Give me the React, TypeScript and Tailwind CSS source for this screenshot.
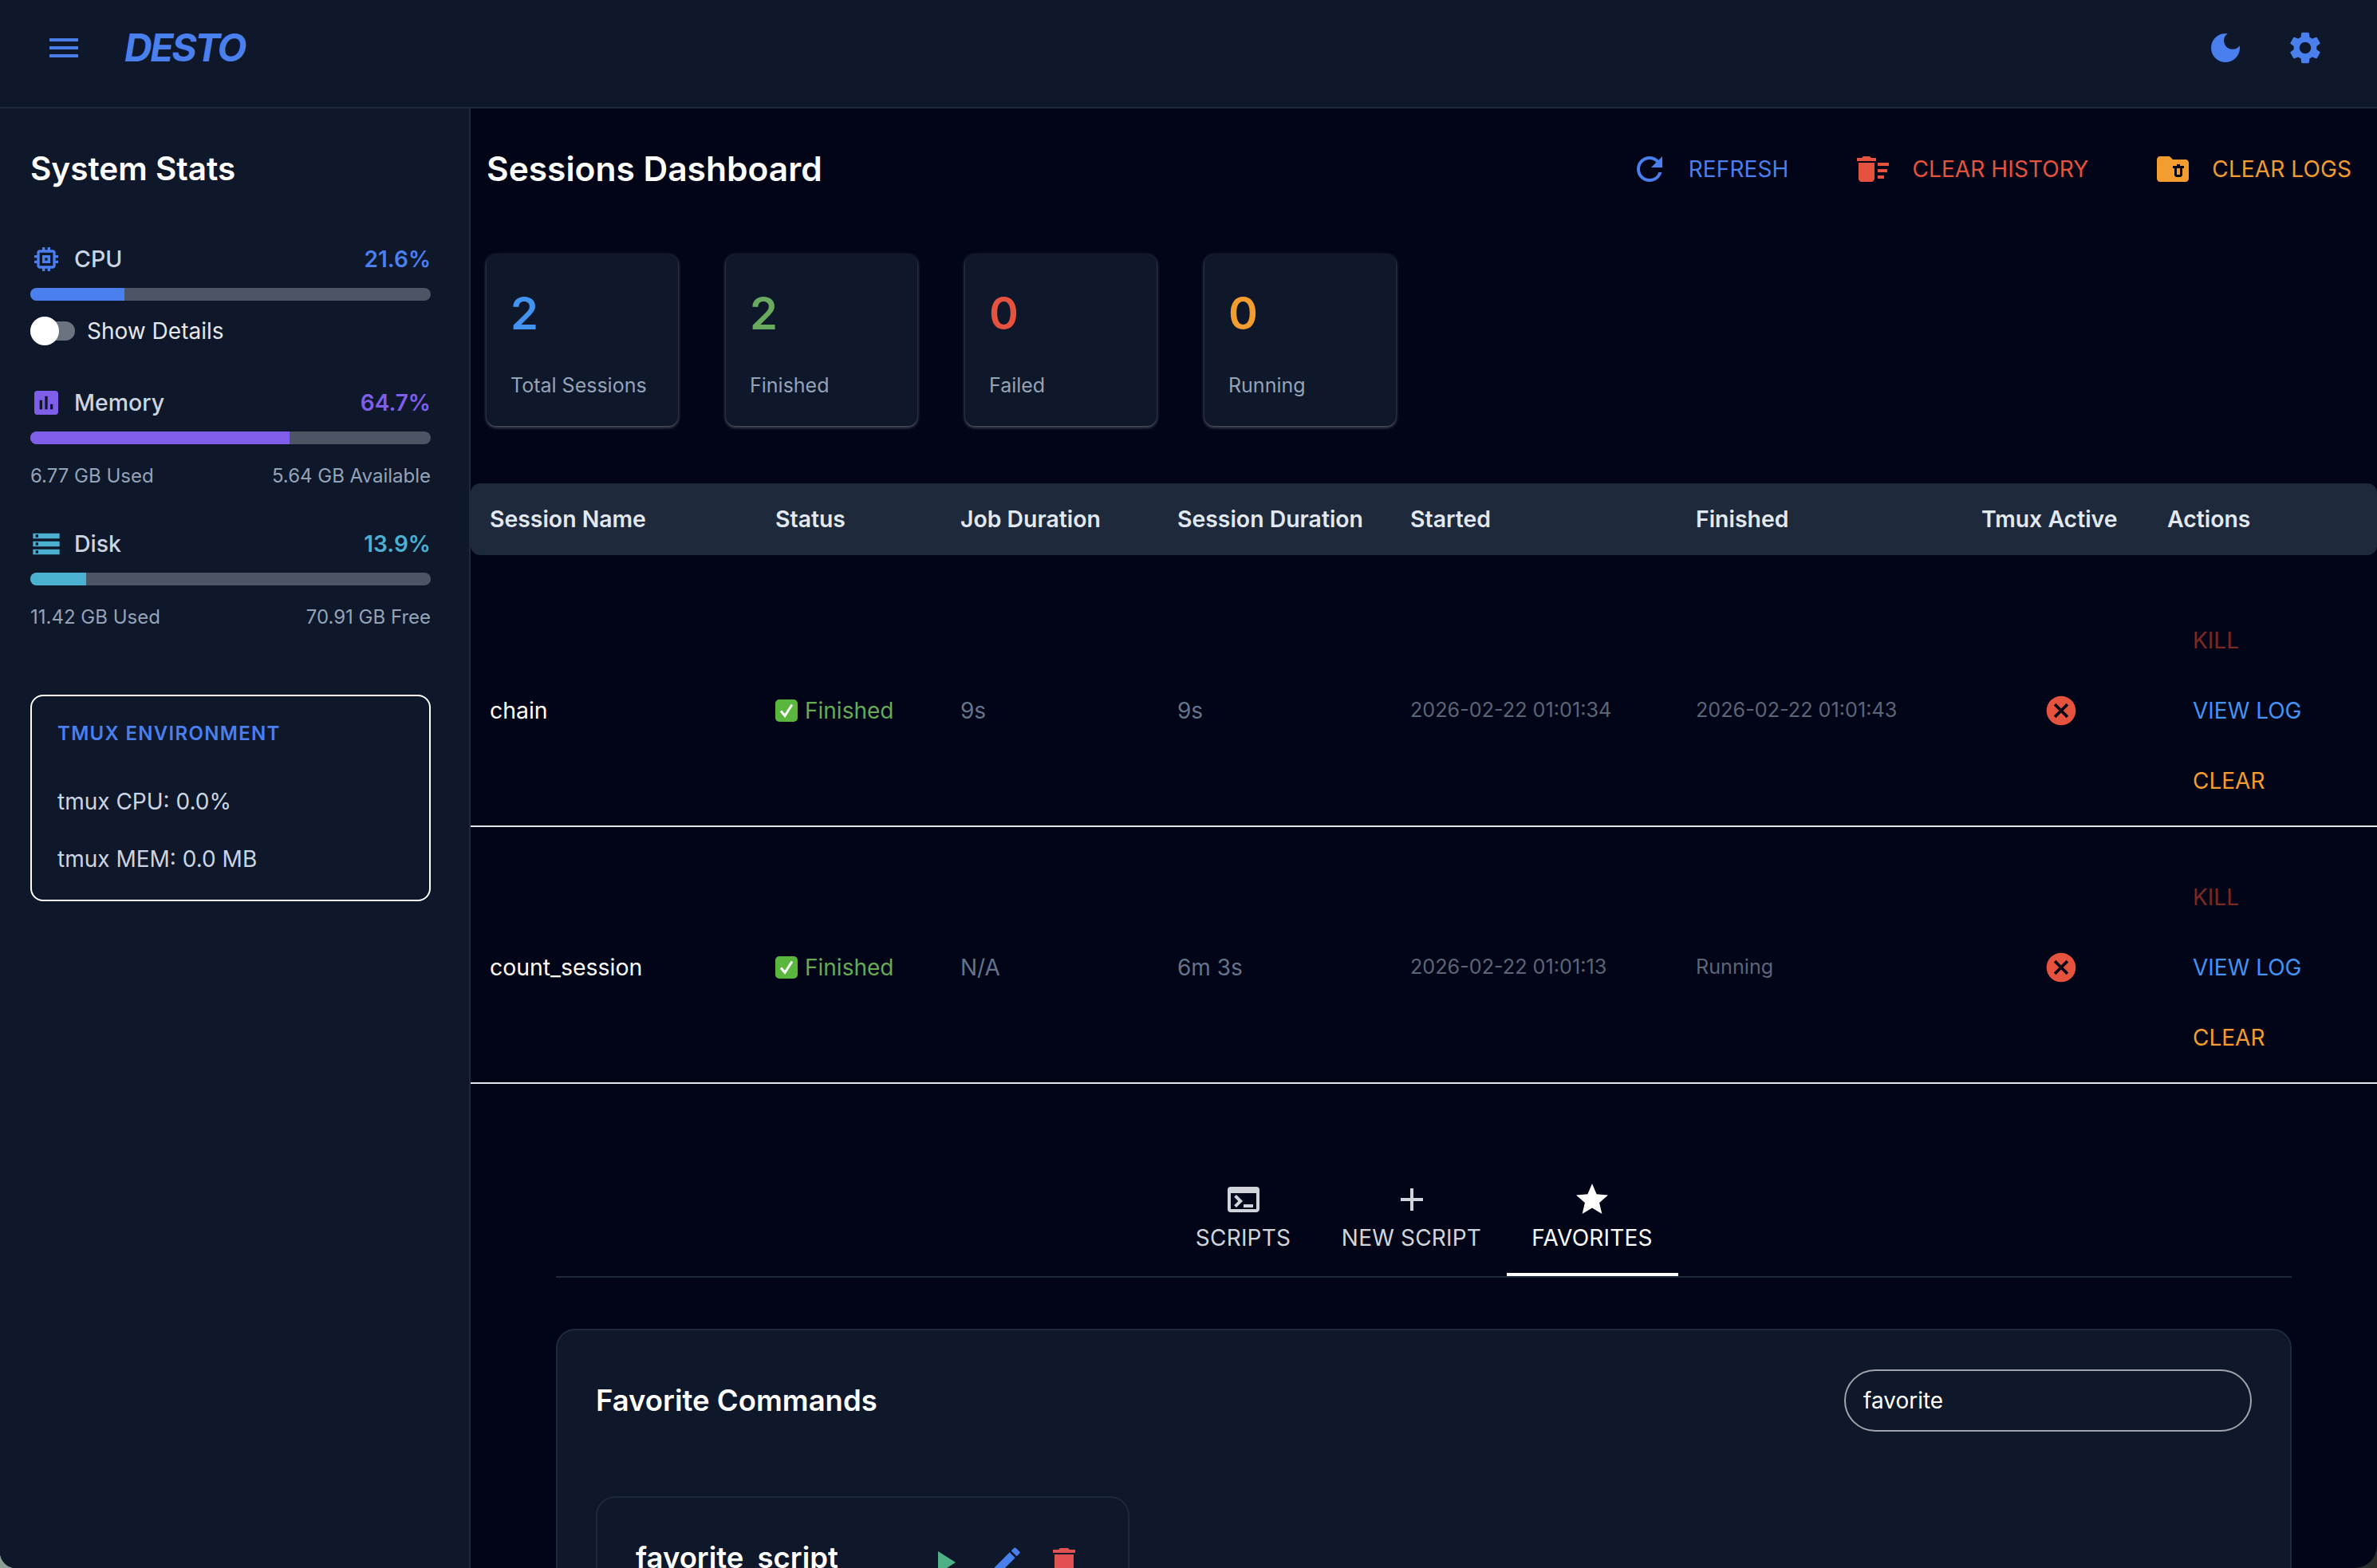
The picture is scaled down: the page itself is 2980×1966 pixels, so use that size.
import React from "react";
import {
  MdMenu, MdDarkMode, MdSettings, MdMemory, MdAssessment, MdStorage, MdRefresh, MdDeleteSweep,
  MdFolderDelete, MdCancel, MdTerminal, MdAdd, MdStar, MdPlayArrow, MdEdit, MdDelete,
} from "react-icons/md";

function Meter({ icon, label, value, cls, textCls, fill, left, right }: any) {
  return (
    <div>
      <div className="flex items-center h-[36px]">
        <span className={`w-[55px] flex ${textCls}`}>{icon}</span>
        <span className="text-[28.5px] font-medium text-[#cbd5e1]">{label}</span>
        <span className={`ml-auto text-[28px] font-semibold ${textCls}`}>{value}</span>
      </div>
      <div className="mt-[18px] h-[16px] rounded-full bg-[#4b5563] overflow-hidden">
        <div className={`h-full ${cls} ${fill}`} />
      </div>
      {left && (
        <div className="mt-[25px] flex justify-between text-[24px] leading-[30px] text-[#94a3b8]">
          <span>{left}</span>
          <span>{right}</span>
        </div>
      )}
    </div>
  );
}

function Stat({ value, label, color }: { value: string; label: string; color: string }) {
  return (
    <div className="w-[240px] h-[215px] rounded-[12px] bg-[#0f172a] px-[30px] pt-[38px] shadow-[0_2px_4px_rgba(255,255,255,0.3),0_0_5px_rgba(255,255,255,0.12)]">
      <div className={`text-[56px] leading-[72px] font-semibold ${color}`}>{value}</div>
      <div className="mt-[36px] text-[25px] leading-[36px] text-[#94a3b8]">{label}</div>
    </div>
  );
}

function Check() {
  return (
    <svg width="28" height="28" viewBox="0 0 28 28" className="shrink-0">
      <rect width="28" height="28" rx="5" fill="#5bb63d" />
      <path d="M7 14.5l5 6 9-14" fill="none" stroke="#fff" strokeWidth="3" />
    </svg>
  );
}

function Row({ name, job, dur, started, finished }: any) {
  const td = "border-b-2 border-[#e5e7eb] pt-[32px] px-[24px] align-middle";
  return (
    <tr className="h-[322px]">
      <td className={`${td} text-[28.4px] text-white`}>{name}</td>
      <td className={td}>
        <div className="flex items-center gap-[9px] text-[28px] text-[#66aa55]">
          <Check />
          Finished
        </div>
      </td>
      <td className={`${td} text-[28px] text-[#64748b]`}>{job}</td>
      <td className={`${td} text-[28px] text-[#64748b]`}>{dur}</td>
      <td className={`${td} text-[25.2px] text-[#5b6577]`}>{started}</td>
      <td className={`${td} text-[25.2px] text-[#5b6577]`}>{finished}</td>
      <td className={td}>
        <div className="pl-[78px] flex text-[#e5533f]">
          <span className="relative">
            <span className="absolute left-[8px] top-[8px] w-[28px] h-[28px] rounded-full bg-[#020518]" />
            <MdCancel size={44} className="relative" />
          </span>
        </div>
      </td>
      <td className={td}>
        <div className="pl-[32px] flex flex-col gap-[48px] text-[28px] leading-[40px]">
          <span className="text-[#7a2a22]">KILL</span>
          <span className="text-[#4393f0]">VIEW LOG</span>
          <span className="text-[#f39c2f]">CLEAR</span>
        </div>
      </td>
    </tr>
  );
}

export default function App() {
  const heads = ["Session Name", "Status", "Job Duration", "Session Duration", "Started", "Finished", "Tmux Active", "Actions"];
  return (
    <div className="w-[2980px] h-[1966px] overflow-hidden bg-gradient-to-r from-[#8aa095] to-[#2a2e2a]">
      <div className="w-full h-full overflow-hidden rounded-bl-[20px] rounded-br-[28px] bg-[#020518] text-white flex flex-col font-['Inter',sans-serif]">
        <header className="h-[136px] shrink-0 bg-[#0f172a] border-b-2 border-[#1e293b] flex items-center pl-[56px] pr-[66px] pb-[14px]">
          <MdMenu size={48} className="text-[#4a7fee]" />
          <span className="ml-[52px] text-[48px] leading-none font-bold italic tracking-[-2.4px] text-[#4a7fee]">DESTO</span>
          <MdDarkMode size={48} className="ml-auto text-[#4a7fee]" />
          <MdSettings size={48} className="ml-[52px] text-[#4a7fee]" />
        </header>
        <div className="flex flex-1 min-h-0">
          <aside className="w-[590px] shrink-0 bg-[#0f172a] border-r-2 border-[#1e293b] pl-[38px] pr-[48px] pt-[52px]">
            <h2 className="text-[40.5px] leading-[48px] font-semibold">System Stats</h2>
            <div className="mt-[71px]">
              <Meter icon={<MdMemory size={40} />} label="CPU" value="21.6%" cls="bg-[#4a7fee]" textCls="text-[#4a7fee]" fill="w-[23.5%]" />
              <div className="mt-[20px] h-[36px] flex items-center">
                <span className="relative block w-[56px] h-[24px] rounded-full bg-[#6b7280]">
                  <span className="absolute left-0 top-[-6px] w-[36px] h-[36px] rounded-full bg-white" />
                </span>
                <span className="ml-[15px] text-[28px] text-[#e5e7eb]">Show Details</span>
              </div>
            </div>
            <div className="mt-[54px]">
              <Meter icon={<MdAssessment size={40} />} label="Memory" value="64.7%" cls="bg-[#7f5fea]" textCls="text-[#7f5fea]" fill="w-[64.7%]" left="6.77 GB Used" right="5.64 GB Available" />
            </div>
            <div className="mt-[52px]">
              <Meter icon={<MdStorage size={40} />} label="Disk" value="13.9%" cls="bg-[#4cb0d0]" textCls="text-[#4cb0d0]" fill="w-[13.9%]" left="11.42 GB Used" right="70.91 GB Free" />
            </div>
            <div className="mt-[82px] h-[259px] rounded-[16px] border-2 border-white px-[32px] pt-[32px]">
              <div className="text-[24px] leading-[30px] font-semibold tracking-[1.3px] text-[#4a7fee]">TMUX ENVIRONMENT</div>
              <div className="mt-[50px] text-[28px] leading-[40px] text-[#cbd5e1]">tmux CPU: 0.0%</div>
              <div className="mt-[32px] text-[28px] leading-[40px] text-[#cbd5e1]">tmux MEM: 0.0 MB</div>
            </div>
          </aside>
          <main className="flex-1 min-w-0 pt-[44px]">
            <div className="flex items-center h-[64px] pl-[20px] pr-[32px]">
              <h1 className="text-[42.5px] font-semibold">Sessions Dashboard</h1>
              <div className="ml-auto flex items-center text-[28px] tracking-[0.1px]">
                <span className="flex items-center gap-[25px] text-[#4a7fee]"><MdRefresh size={48} />REFRESH</span>
                <span className="ml-[82px] flex items-center gap-[25px] text-[#e5533f]"><MdDeleteSweep size={48} />CLEAR HISTORY</span>
                <span className="ml-[82px] flex items-center gap-[25px] text-[#f39c2f]"><MdFolderDelete size={48} />CLEAR LOGS</span>
              </div>
            </div>
            <div className="mt-[75px] ml-[20px] flex gap-[60px]">
              <Stat value="2" label="Total Sessions" color="text-[#4393f0]" />
              <Stat value="2" label="Finished" color="text-[#6aaa5e]" />
              <Stat value="0" label="Failed" color="text-[#e5533f]" />
              <Stat value="0" label="Running" color="text-[#f39c2f]" />
            </div>
            <table className="mt-[72px] w-full table-fixed border-separate border-spacing-0">
              <colgroup>
                <col className="w-[358px]" /><col className="w-[232px]" /><col className="w-[272px]" /><col className="w-[292px]" />
                <col className="w-[358px]" /><col className="w-[358px]" /><col className="w-[233px]" /><col className="w-[287px]" />
              </colgroup>
              <thead>
                <tr className="h-[90px]">
                  {heads.map((h) => (
                    <th key={h} className="bg-[#1e293b] px-[24px] text-left text-[28.4px] font-semibold text-[#e2e8f0] whitespace-nowrap first:rounded-l-[12px] last:rounded-r-[12px]">{h}</th>
                  ))}
                </tr>
                <tr className="h-[19px]"><th colSpan={8} /></tr>
              </thead>
              <tbody>
                <Row name="chain" job="9s" dur="9s" started="2026-02-22 01:01:34" finished="2026-02-22 01:01:43" />
                <Row name="count_session" job="N/A" dur="6m 3s" started="2026-02-22 01:01:13" finished="Running" />
              </tbody>
            </table>
            <section className="mt-[107px] ml-[107px] mr-[107px]">
              <div className="flex justify-center border-b-2 border-[#1e293b] h-[136px] text-[28px] tracking-[0.2px]">
                <div className="w-[184px] flex flex-col items-center text-[#d1d5db] pt-[14px]">
                  <MdTerminal size={48} />
                  <span className="mt-[6px] leading-[36px]">SCRIPTS</span>
                </div>
                <div className="w-[238px] flex flex-col items-center text-[#d1d5db] pt-[14px]">
                  <MdAdd size={48} />
                  <span className="mt-[6px] leading-[36px]">NEW SCRIPT</span>
                </div>
                <div className="w-[215px] h-[134px] flex flex-col items-center text-white border-b-4 border-white pt-[14px]">
                  <MdStar size={48} />
                  <span className="mt-[6px] leading-[36px]">FAVORITES</span>
                </div>
              </div>
              <div className="mt-[64px] rounded-[24px] border-2 border-[#1e293b] bg-[#0f172a] px-[48px] pt-[49px] h-[400px]">
                <div className="flex items-center justify-between">
                  <h3 className="text-[36.5px] font-semibold">Favorite Commands</h3>
                  <div className="w-[511px] h-[78px] rounded-full border-2 border-[#a0a4ab] flex items-center pl-[22px] text-[28px]">favorite</div>
                </div>
                <div className="mt-[81px] w-[669px] h-[200px] rounded-[24px] border-2 border-[#1e293b] pl-[48px] pr-[56px] pt-[53px] flex items-start">
                  <span className="text-[36.5px] leading-[44px] font-semibold">favorite_script</span>
                  <span className="ml-auto flex items-start mt-[4px]">
                    <MdPlayArrow size={48} className="text-[#4fb286]" />
                    <MdEdit size={44} className="ml-[32px] text-[#4a7fee]" />
                    <MdDelete size={48} className="ml-[26px] text-[#e05252]" />
                  </span>
                </div>
              </div>
            </section>
          </main>
        </div>
      </div>
    </div>
  );
}
